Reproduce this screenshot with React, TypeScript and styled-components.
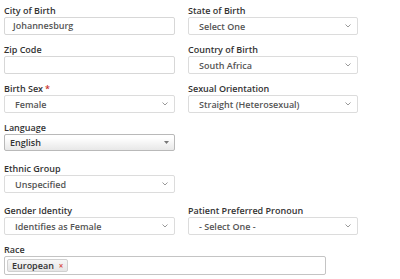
import { createGlobalStyle, styled } from 'styled-components'

const Global = createGlobalStyle`
  html, body {
    margin: 0;
    padding: 0;
    background: #fff;
    font-family: 'Open Sans', 'Liberation Sans', sans-serif;
  }
`

const Form = styled.div`
  width: 400px;
  padding: 4px 0 0 4px;
  box-sizing: border-box;
  display: grid;
  grid-template-columns: 171px 170px;
  column-gap: 13px;
  row-gap: 8px;
  align-items: start;
`

const Field = styled.div<{ $col?: string; $push?: number }>`
  display: flex;
  flex-direction: column;
  grid-column: ${(p) => p.$col || 'auto'};
  margin-top: ${(p) => p.$push || 0}px;
`

const Label = styled.label`
  font-size: 9px;
  font-weight: 600;
  line-height: 13px;
  color: #333;
  white-space: nowrap;
`

const Star = styled.span`
  color: #c9302c;
  margin-left: 2px;
`

const Input = styled.div`
  height: 18px;
  box-sizing: border-box;
  border: 1px solid #d7d7d7;
  border-radius: 2px;
  padding: 0 8px;
  font-size: 9px;
  line-height: 16px;
  color: #555;
  font-weight: 600;
  background: #fff;
`

const Select = styled.div<{ $indent?: number }>`
  height: 18px;
  box-sizing: border-box;
  border: 1px solid #dcdcdc;
  border-radius: 2px;
  padding: 0 6px 0 ${(p) => p.$indent ?? 10}px;
  display: flex;
  align-items: center;
  justify-content: space-between;
  font-size: 9px;
  font-weight: 600;
  color: #555;
  background: #fff;
`

const Chosen = styled.div`
  height: 17px;
  box-sizing: border-box;
  border: 1px solid #b9b9b9;
  border-radius: 2px;
  padding: 0 5px 0 5px;
  display: flex;
  align-items: center;
  justify-content: space-between;
  font-size: 9px;
  font-weight: 600;
  color: #333;
  background: linear-gradient(#ffffff 20%, #f3f3f3 60%, #e8e8e8);
`

const Multi = styled.div`
  width: 322px;
  height: 19px;
  box-sizing: border-box;
  border: 1px solid #c4c4c4;
  border-radius: 2px;
  padding: 0 2px;
  display: flex;
  align-items: center;
  background: #fff;
`

const Chip = styled.span`
  display: inline-flex;
  align-items: center;
  gap: 5px;
  height: 13px;
  box-sizing: border-box;
  padding: 0 4px 0 4px;
  border: 1px solid #d0d0d0;
  border-radius: 2px;
  background: linear-gradient(#f6f6f6, #e6e6e6);
  font-size: 9px;
  font-weight: 600;
  color: #333;
`

const Remove = styled.span`
  color: #d9534f;
  font-size: 8px;
  font-weight: 700;
`

const Chevron = () => (
  <svg width="6" height="4" viewBox="0 0 6 4">
    <path d="M0.5 0.5 L3 3 L5.5 0.5" fill="none" stroke="#999" strokeWidth="1" />
  </svg>
)

const Caret = () => (
  <svg width="5" height="3" viewBox="0 0 5 3">
    <path d="M0 0 L5 0 L2.5 3 Z" fill="#777" />
  </svg>
)

function App() {
  return (
    <>
      <Global />
      <Form>
        <Field>
          <Label>City of Birth</Label>
          <Input>Johannesburg</Input>
        </Field>
        <Field>
          <Label>State of Birth</Label>
          <Select>
            Select One
            <Chevron />
          </Select>
        </Field>
        <Field>
          <Label>Zip Code</Label>
          <Input />
        </Field>
        <Field>
          <Label>Country of Birth</Label>
          <Select>
            South Africa
            <Chevron />
          </Select>
        </Field>
        <Field>
          <Label>
            Birth Sex<Star>*</Star>
          </Label>
          <Select>
            Female
            <Chevron />
          </Select>
        </Field>
        <Field>
          <Label>Sexual Orientation</Label>
          <Select>
            Straight (Heterosexual)
            <Chevron />
          </Select>
        </Field>
        <Field $col="1">
          <Label>Language</Label>
          <Chosen>
            English
            <Caret />
          </Chosen>
        </Field>
        <Field $col="1" $push={3}>
          <Label>Ethnic Group</Label>
          <Select>
            Unspecified
            <Chevron />
          </Select>
        </Field>
        <Field $col="1" $push={3}>
          <Label>Gender Identity</Label>
          <Select>
            Identifies as Female
            <Chevron />
          </Select>
        </Field>
        <Field $push={3}>
          <Label>Patient Preferred Pronoun</Label>
          <Select>
            - Select One -
            <Chevron />
          </Select>
        </Field>
        <Field $col="1 / 3">
          <Label>Race</Label>
          <Multi>
            <Chip>
              European
              <Remove>×</Remove>
            </Chip>
          </Multi>
        </Field>
      </Form>
    </>
  )
}

export default App
